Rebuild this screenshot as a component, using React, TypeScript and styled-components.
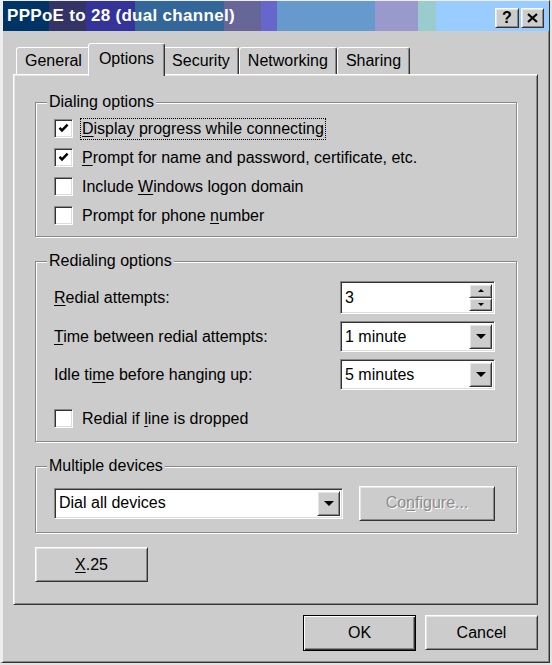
import React from 'react'
import styled, { createGlobalStyle, css } from 'styled-components'

const face = '#cccccc'
const shadow = '#888888'
const dark = '#333333'

const GlobalStyle = createGlobalStyle`
  html, body { margin:0; padding:0; background:#e4e4e4; }
  body {
    font-family:"Liberation Sans", Arial, sans-serif;
    font-size:16px;
    color:#000;
  }
`

const raised = css`
  background:${face};
  border:1px solid;
  border-color:#fff ${dark} ${dark} #fff;
  box-shadow:inset 1px 1px 0 #e6e6e6, inset -1px -1px 0 ${shadow};
  box-sizing:border-box;
`

const sunken = css`
  border:1px solid;
  border-color:${shadow} #fff #fff ${shadow};
  box-shadow:inset 1px 1px 0 ${dark}, inset -1px -1px 0 #dcdcdc;
  box-sizing:border-box;
`

const Window = styled.div`
  width:550px;
  height:663px;
  box-sizing:border-box;
  background:${face};
  border-style:solid;
  border-width:1px 1px 1px 3px;
  border-color:#eeeeee ${dark} ${dark} #eeeeee;
  box-shadow:inset -1px -1px 0 ${shadow};
  display:flex;
  flex-direction:column;
`

// the title bar is a dithered gradient, drawn as hard colour stops
const TitleBar = styled.div`
  height:30px;
  flex-shrink:0;
  display:flex;
  align-items:center;
  padding:0 5px 0 4px;
  background:linear-gradient(to right,
    #003366 0 46px, #333366 46px 83px, #333399 83px 132px, #336699 132px 221px,
    #666699 221px 258px, #6666cc 258px 274px, #6699cc 274px 372px,
    #9999cc 372px 415px, #99cccc 415px 433px, #99ccff 433px);
`

const TitleText = styled.span`
  flex:1;
  color:#fff;
  font-weight:bold;
  font-size:17px;
  letter-spacing:0.3px;
  white-space:nowrap;
`

const CaptionButton = styled.div<{ $w: number }>`
  ${raised}
  width:${p => p.$w}px;
  height:20px;
  margin-left:2px;
  margin-top:3px;
  display:flex;
  align-items:center;
  justify-content:center;
  font-weight:bold;
  font-size:16px;
`

const Body = styled.div`
  flex:1;
  display:flex;
  flex-direction:column;
  padding:12px 11px 0 10px;
`

const TabStrip = styled.div`
  display:flex;
  align-items:flex-end;
  height:31px;
  padding-left:3px;
`

const Tab = styled.div<{ $active?: boolean }>`
  position:relative;
  box-sizing:border-box;
  display:flex;
  align-items:center;
  background:${face};
  border:1px solid;
  border-bottom:none;
  border-color:#fff ${dark} transparent #fff;
  box-shadow:inset -1px 0 0 ${shadow};
  border-radius:3px 3px 0 0;
  padding:0 8px;
  height:${p => (p.$active ? 33 : 27)}px;
  ${p => p.$active && css`
    z-index:1;
    margin:0 -2px -2px -3px;
    padding:0 10px 2px 10px;
  `}
`

const Panel = styled.div`
  height:531px;
  box-sizing:border-box;
  border:1px solid;
  border-color:#fff ${dark} ${dark} #fff;
  box-shadow:inset 1px 1px 0 #e6e6e6, inset -1px -1px 0 ${shadow};
  padding:27px 20px 0 21px;
  display:flex;
  flex-direction:column;
  gap:24px;
`

const GroupBox = styled.div<{ $pad: string }>`
  position:relative;
  border:1px solid ${shadow};
  box-shadow:1px 1px 0 #fff, inset 1px 1px 0 #fff;
  padding:${p => p.$pad};
`

const GroupLabel = styled.span`
  position:absolute;
  top:-10px;
  left:11px;
  padding:0 2px;
  background:${face};
  line-height:18px;
`

const CheckRow = styled.div`
  height:29px;
  display:flex;
  align-items:center;
  gap:7px;
`

const Box = styled.div`
  ${sunken}
  width:19px;
  height:19px;
  background:#fff;
  display:flex;
  align-items:center;
  justify-content:center;
`

const CheckLabel = styled.span<{ $focus?: boolean }>`
  padding:0 1px;
  line-height:20px;
  border:1px ${p => (p.$focus ? 'dotted #000' : 'solid transparent')};
`

const Key = styled.u`
  text-underline-offset:2px;
`

const RedialGrid = styled.div`
  display:grid;
  grid-template-columns:1fr 155px;
  grid-template-rows:33px 31px 31px;
  row-gap:7px;
  align-items:center;
  margin-bottom:14px;
`

const Field = styled.div<{ $w: number; $h: number }>`
  ${sunken}
  width:${p => p.$w}px;
  height:${p => p.$h}px;
  background:#fff;
  display:flex;
  align-items:stretch;
  padding:2px;
`

const FieldText = styled.span`
  flex:1;
  display:flex;
  align-items:center;
  padding-left:2px;
`

const DropButton = styled.div`
  ${raised}
  width:23px;
  display:flex;
  align-items:center;
  justify-content:center;
`

const SpinColumn = styled.div`
  width:23px;
  display:flex;
  flex-direction:column;
`

const SpinHalf = styled.div`
  ${raised}
  flex:1;
  display:flex;
  align-items:center;
  justify-content:center;
`

const DevicesRow = styled.div`
  display:flex;
  align-items:center;
  justify-content:space-between;
  height:34px;
`

const PushButton = styled.div<{ $w: number; $default?: boolean; $disabled?: boolean }>`
  ${raised}
  width:${p => p.$w}px;
  height:${p => (p.$default ? 36 : 35)}px;
  display:flex;
  align-items:center;
  justify-content:center;
  ${p => p.$default && css`
    border-color:#000;
    box-shadow:inset 1px 1px 0 #fff, inset -1px -1px 0 ${dark}, inset -2px -2px 0 ${shadow};
  `}
  ${p => p.$disabled && css`
    color:#8c8c8c;
    text-shadow:1px 1px 0 #fff;
  `}
`

const X25Row = styled.div`
  margin-top:-10px;
`

const Footer = styled.div`
  display:flex;
  justify-content:flex-end;
  gap:9px;
  margin-top:10px;
`

const Tick = () => (
  <svg width="13" height="13" viewBox="0 0 13 13">
    <path d="M2.5 5.8 L5 8.4 L10.6 2.6" stroke="#000" strokeWidth="2.4" fill="none" />
  </svg>
)

const Down = ({ w = 10, h = 5 }: { w?: number; h?: number }) => (
  <svg width={w} height={h} viewBox={`0 0 ${w} ${h}`}>
    <polygon points={`0,0 ${w},0 ${w / 2},${h}`} fill="#000" />
  </svg>
)

const Up = () => (
  <svg width="6" height="3" viewBox="0 0 6 3">
    <polygon points="0,3 6,3 3,0" fill="#000" />
  </svg>
)

const CloseGlyph = () => (
  <svg width="11" height="10" viewBox="0 0 11 10">
    <path d="M1 1 L10 9 M10 1 L1 9" stroke="#000" strokeWidth="2.2" />
  </svg>
)

function Check({ checked, focus, children }: { checked?: boolean; focus?: boolean; children: React.ReactNode }) {
  return (
    <CheckRow>
      <Box>{checked && <Tick />}</Box>
      <CheckLabel $focus={focus}>{children}</CheckLabel>
    </CheckRow>
  )
}

function Combo({ w, value }: { w: number; value: string }) {
  return (
    <Field $w={w} $h={31}>
      <FieldText>{value}</FieldText>
      <DropButton><Down /></DropButton>
    </Field>
  )
}

const tabs = ['General', 'Options', 'Security', 'Networking', 'Sharing']

export default function App() {
  return (
    <>
      <GlobalStyle />
      <Window>
        <TitleBar>
          <TitleText>PPPoE to 28 (dual channel)</TitleText>
          <CaptionButton $w={24}>?</CaptionButton>
          <CaptionButton $w={23}><CloseGlyph /></CaptionButton>
        </TitleBar>

        <Body>
          <TabStrip>
            {tabs.map(t => (
              <Tab key={t} $active={t === 'Options'}>{t}</Tab>
            ))}
          </TabStrip>

          <Panel>
            <GroupBox $pad="11px 18px 6px">
              <GroupLabel>Dialing options</GroupLabel>
              <Check checked focus><Key>D</Key>isplay progress while connecting</Check>
              <Check checked><Key>P</Key>rompt for name and password, certificate, etc.</Check>
              <Check>Include <Key>W</Key>indows logon domain</Check>
              <Check>Prompt for phone <Key>n</Key>umber</Check>
            </GroupBox>

            <GroupBox $pad="19px 21px 8px 18px">
              <GroupLabel>Redialing options</GroupLabel>
              <RedialGrid>
                <span><Key>R</Key>edial attempts:</span>
                <Field $w={155} $h={33}>
                  <FieldText>3</FieldText>
                  <SpinColumn>
                    <SpinHalf><Up /></SpinHalf>
                    <SpinHalf><Down w={6} h={3} /></SpinHalf>
                  </SpinColumn>
                </Field>
                <span><Key>T</Key>ime between redial attempts:</span>
                <Combo w={155} value="1 minute" />
                <span>Idle ti<Key>m</Key>e before hanging up:</span>
                <Combo w={155} value="5 minutes" />
              </RedialGrid>
              <Check>Redial if <Key>l</Key>ine is dropped</Check>
            </GroupBox>

            <GroupBox $pad="19px 21px 12px 18px">
              <GroupLabel>Multiple devices</GroupLabel>
              <DevicesRow>
                <Combo w={289} value="Dial all devices" />
                <PushButton $w={136} $disabled>Co<Key>n</Key>figure...</PushButton>
              </DevicesRow>
            </GroupBox>

            <X25Row>
              <PushButton $w={113}><Key>X</Key>.25</PushButton>
            </X25Row>
          </Panel>

          <Footer>
            <PushButton $w={113} $default>OK</PushButton>
            <PushButton $w={113}>Cancel</PushButton>
          </Footer>
        </Body>
      </Window>
    </>
  )
}
